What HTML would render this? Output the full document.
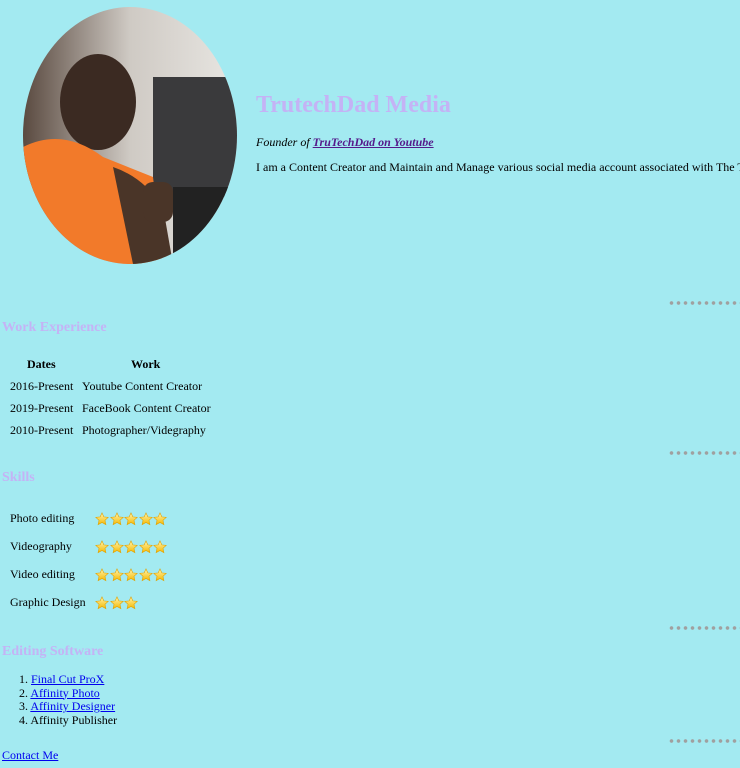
<!DOCTYPE html>
<html style="overflow:hidden"><head><meta charset="utf-8"><style>
html,body{overflow:hidden}
body{margin:0;width:740px;height:768px;background:#a3eaf1;font-family:"Liberation Serif",serif;font-size:12px;color:#000;position:relative}
.a{position:absolute;white-space:nowrap}
h{color:#c4b3f5;font-weight:bold;font-size:14px}
.dots{position:absolute;left:668px;width:72px;height:4px;background:radial-gradient(circle,#a0a0a0 1.6px,transparent 2px) 0 0/7px 4px repeat-x}
a{color:#00e}
.st{display:inline-block;width:14px;height:14px;margin-right:0.5px}
</style></head><body>
<svg class="a" style="left:23px;top:7px" width="214" height="257">
<defs><clipPath id="c"><ellipse cx="107" cy="128.5" rx="107" ry="128.5"/></clipPath>
<linearGradient id="bg" x1="0" y1="0" x2="1" y2="0"><stop offset="0" stop-color="#5a4a40"/><stop offset="0.5" stop-color="#cfcac4"/><stop offset="1" stop-color="#e8e6e2"/></linearGradient></defs>
<g clip-path="url(#c)">
<rect width="214" height="257" fill="url(#bg)"/>
<rect x="130" y="70" width="84" height="120" fill="#3a3a3c"/>
<rect x="150" y="180" width="64" height="80" fill="#222"/>
<ellipse cx="75" cy="95" rx="38" ry="48" fill="#3b2a22"/>
<path d="M0 140 Q40 120 80 150 L130 170 L140 257 L0 257Z" fill="#f27a2a"/>
<path d="M90 160 Q120 170 140 200 L150 257 L110 257Z" fill="#4a3528"/>
<rect x="120" y="175" width="30" height="40" rx="10" fill="#4a3528"/>
</g></svg>
<div class="a" style="left:256px;top:92px"><h style="font-size:24px">TrutechDad Media</h></div>
<div class="a" style="left:256px;top:135px;font-style:italic">Founder of <a href="#" style="color:#551a8b;font-weight:bold">TruTechDad on Youtube</a></div>
<div class="a" style="left:256px;top:160px;width:484px;overflow:hidden">I am a Content Creator and Maintain and Manage various social media account associated with The TruTechDad brand</div>
<div class="dots" style="top:301px"></div>
<div class="a" style="left:2px;top:320px"><h>Work Experience</h></div>
<div class="a" style="left:27px;top:357px;font-weight:bold">Dates</div>
<div class="a" style="left:131px;top:357px;font-weight:bold">Work</div>
<div class="a" style="left:10px;top:379px">2016-Present</div><div class="a" style="left:82px;top:379px">Youtube Content Creator</div>
<div class="a" style="left:10px;top:401px">2019-Present</div><div class="a" style="left:82px;top:401px">FaceBook Content Creator</div>
<div class="a" style="left:10px;top:423px">2010-Present</div><div class="a" style="left:82px;top:423px">Photographer/Videgraphy</div>
<div class="dots" style="top:451px"></div>
<div class="a" style="left:2px;top:470px"><h>Skills</h></div>
<svg width="0" height="0" style="position:absolute"><defs><linearGradient id="sg" x1="0" y1="0" x2="0" y2="1"><stop offset="0" stop-color="#fff6b0"/><stop offset="1" stop-color="#f5b800"/></linearGradient><symbol id="s" viewBox="0 0 24 24"><path d="M12 1.5l3.2 6.9 7.5.8-5.6 5.1 1.6 7.4L12 17.9l-6.7 3.8 1.6-7.4-5.6-5.1 7.5-.8z" fill="url(#sg)" stroke="#e0a000" stroke-width="1"/></symbol></defs></svg>
<div class="a" style="left:10px;top:511px">Photo editing</div>
<div class="a" style="left:95px;top:512px"><svg class="st"><use href="#s"/></svg><svg class="st"><use href="#s"/></svg><svg class="st"><use href="#s"/></svg><svg class="st"><use href="#s"/></svg><svg class="st"><use href="#s"/></svg></div>
<div class="a" style="left:10px;top:539px">Videography</div>
<div class="a" style="left:95px;top:540px"><svg class="st"><use href="#s"/></svg><svg class="st"><use href="#s"/></svg><svg class="st"><use href="#s"/></svg><svg class="st"><use href="#s"/></svg><svg class="st"><use href="#s"/></svg></div>
<div class="a" style="left:10px;top:567px">Video editing</div>
<div class="a" style="left:95px;top:568px"><svg class="st"><use href="#s"/></svg><svg class="st"><use href="#s"/></svg><svg class="st"><use href="#s"/></svg><svg class="st"><use href="#s"/></svg><svg class="st"><use href="#s"/></svg></div>
<div class="a" style="left:10px;top:595px">Graphic Design</div>
<div class="a" style="left:95px;top:596px"><svg class="st"><use href="#s"/></svg><svg class="st"><use href="#s"/></svg><svg class="st"><use href="#s"/></svg></div>
<div class="dots" style="top:626px"></div>
<div class="a" style="left:2px;top:644px"><h>Editing Software</h></div>
<div class="a" style="left:19px;top:673px;line-height:13.5px">1. <a href="#">Final Cut ProX</a><br>2. <a href="#">Affinity Photo</a><br>3. <a href="#">Affinity Designer</a><br>4. Affinity Publisher</div>
<div class="dots" style="top:739px"></div>
<div class="a" style="left:2px;top:748px"><a href="#">Contact Me</a></div>
</body></html>
